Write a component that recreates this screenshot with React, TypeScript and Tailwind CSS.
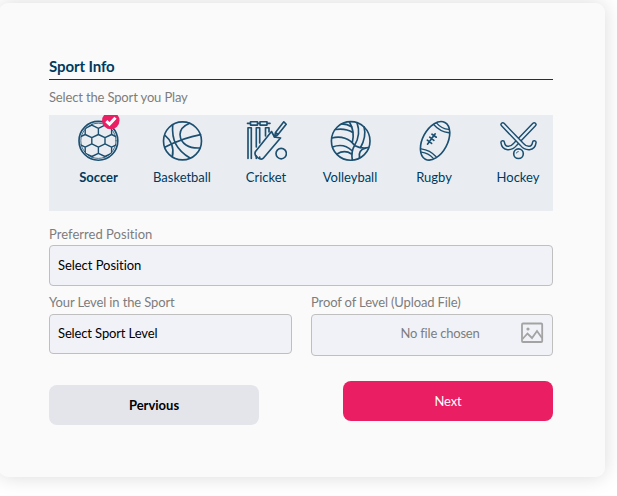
import type { ReactNode } from "react";

const NAVY = "#1c4f70";

function hexPath(cx: number, cy: number) {
  const w = 6.6;
  return `M${cx} ${cy - 6.3}L${cx + w} ${cy - 3.1}V${cy + 3.1}L${cx} ${cy + 6.3}L${cx - w} ${cy + 3.1}V${cy - 3.1}Z`;
}

function Icon({ children }: { children: ReactNode }) {
  return (
    <svg width="42" height="42" viewBox="0 0 42 42" fill="none" stroke={NAVY} strokeWidth="1.65" strokeLinecap="round" strokeLinejoin="round" className="block">
      {children}
    </svg>
  );
}

function Soccer() {
  const cells: string[] = [];
  for (let row = -2; row <= 2; row++) {
    for (let col = -2; col <= 2; col++) {
      cells.push(hexPath(21.4 + col * 13.2 + (row % 2 ? 6.6 : 0), 20.8 + row * 9.4));
    }
  }
  return (
    <Icon>
      <clipPath id="ball">
        <circle cx="21.4" cy="20.8" r="18.2" />
      </clipPath>
      <circle cx="21.4" cy="20.8" r="19.4" />
      <circle cx="21.4" cy="20.8" r="17.6" strokeWidth="0.8" />
      <path clipPath="url(#ball)" d={cells.join("")} strokeWidth="1.4" />
    </Icon>
  );
}

function Basketball() {
  return (
    <Icon>
      <circle cx="21.5" cy="20.9" r="19" />
      <path d="M3.7 27.2C14 22 26 17 39.6 14.6M28.6 3.2C22 6 19 9.5 19 14.5C19.5 24 28 28.5 38.7 28M11.7 4.7C10.5 20 15.5 30 29 38M4 15.3C10 20 13.5 28 11.3 36.5" />
    </Icon>
  );
}

function Cricket() {
  return (
    <Icon>
      <path d="M2.5 3.4H5.5M12.5 3.4H15M22 3.4H25M5.5 1.7H12.5V5.1H5.5ZM15 1.7H22V5.1H15Z" />
      <path d="M3 38.5V7.7H6.3V38.5M11.3 27V7.7H14.7V23M11.3 36V38.5M14.7 37V38.5M20.5 16V7.7H24V12" />
      <path d="M26.5 11.5L10.5 31.5C9.2 34 10.2 35.5 12 37C14 39 17 40 18.5 38L35.5 18L29.5 17Z" />
      <path d="M30.5 12.5L38.8 1.8L41.2 4.3L33 14.5M30.5 12.5L29.5 17L33 14.5Z" />
      <circle cx="36.2" cy="33.6" r="5.2" />
    </Icon>
  );
}

function Volleyball() {
  return (
    <Icon>
      <circle cx="21.7" cy="20.9" r="19.3" />
      <path d="M2.8 18C12 15.5 21 18.5 25.5 25.5C31 28.5 35 28.5 39.5 27.5M6.5 9.5C13 8.5 19 9.5 23.8 12.5M12.5 3.8C17 3.8 20 5 23 7M20.5 2C24.5 9 25 16 23.3 22.5M28 2.6C30.8 10.5 29.5 19 25.5 25.5C22.5 30.5 22.5 35 23.3 40M35 6.8C37 14 35 21.5 31.3 28M3.5 27C10 24.5 17 25 22.8 30.5M8 34C13 31 18 31 22.5 34M36.5 28.3C31 29.5 29.5 33 30.5 38" />
    </Icon>
  );
}

function Rugby() {
  return (
    <Icon>
      <g transform="rotate(28 22.1 20.8)">
        <ellipse cx="22.1" cy="20.8" rx="12.4" ry="20.8" />
        <path d="M13.5 7.2Q22 10.5 30.5 7.2M15.2 4.4Q22 7.2 28.8 4.4M13.5 34.4Q22 31.1 30.5 34.4M15.2 37.2Q22 34.4 28.8 37.2" strokeWidth="1.3" />
      </g>
      <path d="M14.5 24.2L22.2 13.8M14.3 20.2L18.6 23.4M16.7 17.2L20.9 20.3M19 14.2L23.3 17.2" />
    </Icon>
  );
}

function Hockey() {
  const right = "M5.8 4.6L24.5 24C29 29.5 36.5 29.5 37.3 22.5";
  const left = "M37.2 4.6L18.5 24C14 29.5 6.5 29.5 5.7 22.5";
  return (
    <Icon>
      <path d={left} strokeWidth="5" />
      <path d={left} stroke="#e9edf2" strokeWidth="2.1" />
      <path d={right} strokeWidth="5" />
      <path d={right} stroke="#e9edf2" strokeWidth="2.1" />
      <circle cx="21.5" cy="33.7" r="4.8" fill="#e9edf2" strokeWidth="1.6" />
      <path d="M19.5 33C19.8 32 20.5 31.6 21.2 31.6" strokeWidth="1" />
    </Icon>
  );
}

const sports = [
  { name: "Soccer", icon: <Soccer />, active: true },
  { name: "Basketball", icon: <Basketball /> },
  { name: "Cricket", icon: <Cricket /> },
  { name: "Volleyball", icon: <Volleyball /> },
  { name: "Rugby", icon: <Rugby /> },
  { name: "Hockey", icon: <Hockey /> },
];

export default function App() {
  return (
    <div className="h-[496px] w-[617px] overflow-hidden bg-white pt-[3px] font-['Lato',sans-serif] text-[14px] leading-5 text-[#7d7d7d]">
      <main className="-ml-px h-[474px] w-[606px] rounded-[9px] bg-[#fafafa] pt-[53px] pl-[50px] shadow-[0_0_20px_rgba(0,0,0,0.15)]">
        <div className="w-[504px]">
          <h1 className="h-6 border-b border-[#003a5d] text-[15px] font-bold tracking-[-0.1px] text-[#003a5d]">Sport Info</h1>
          <p className="mt-[7px] text-[13px] tracking-[-0.15px]">Select the Sport you Play</p>
          <div className="mt-2 flex h-24 overflow-hidden bg-[#e9edf2] pt-[5px] pl-[7px]">
            {sports.map((s) => (
              <div key={s.name} className="relative flex w-[84px] shrink-0 flex-col items-center text-[13px] text-[#003a5d]">
                {s.icon}
                <span className={s.active ? "mt-[5px] pl-px font-bold" : "mt-[5px] tracking-[-0.01px]"}>{s.name}</span>
                {s.active && (
                  <svg width="18" height="18" viewBox="0 0 18 18" className="absolute -top-2 left-[46px]">
                    <circle cx="8.8" cy="8.5" r="8.7" fill="#ea1e63" />
                    <path d="M4.3 9.2L7.5 12.2L13.5 5.8" fill="none" stroke="#fff" strokeWidth="3" />
                  </svg>
                )}
              </div>
            ))}
          </div>
          <p className="mt-[13px] text-[13px] tracking-[0.03px]">Preferred Position</p>
          <div className="mt-px flex h-[41px] items-center rounded-[4px] border border-[#bfbfbf] bg-[#f1f2f7] px-2 pb-0.5 text-[13px] tracking-[-0.05px] text-black">Select Position</div>
          <div className="mt-[6px] flex justify-between text-[13px] tracking-[-0.13px]">
            <div className="w-[243px]">
              <p>Your Level in the Sport</p>
              <div className="mt-[2px] flex h-10 items-center rounded-[4px] border border-[#bfbfbf] bg-[#f1f2f7] px-2 pb-0.5 text-black">Select Sport Level</div>
            </div>
            <div className="w-[242px]">
              <p>Proof of Level (Upload File)</p>
              <div className="mt-[2px] flex h-[42px] items-center rounded-[4px] border border-[#bfbfbf] bg-[#f1f2f7] pr-2 pb-1 pl-[72px]">
                <span className="flex-1 text-center tracking-[-0.2px]">No file chosen</span>
                <svg width="24" height="22" viewBox="0 0 24 22" fill="none" stroke="#a3a3a3" strokeWidth="1.8" className="ml-[24px]">
                  <rect x="2" y="1.5" width="20.2" height="18.5" rx="1" />
                  <path d="M2.5 17L7.5 11.5L12 16L17 9L22 16" />
                  <circle cx="8" cy="7" r="1.6" fill="#a3a3a3" stroke="none" />
                </svg>
              </div>
            </div>
          </div>
          <div className="mt-[25px] flex justify-between text-[13px]">
            <button className="mt-1 h-10 w-[210px] rounded-[8px] bg-[#e4e5eb] font-bold text-black">Pervious</button>
            <button className="h-10 w-[210px] rounded-[8px] bg-[#ea1e63] tracking-[-0.1px] text-white">Next</button>
          </div>
        </div>
      </main>
    </div>
  );
}
